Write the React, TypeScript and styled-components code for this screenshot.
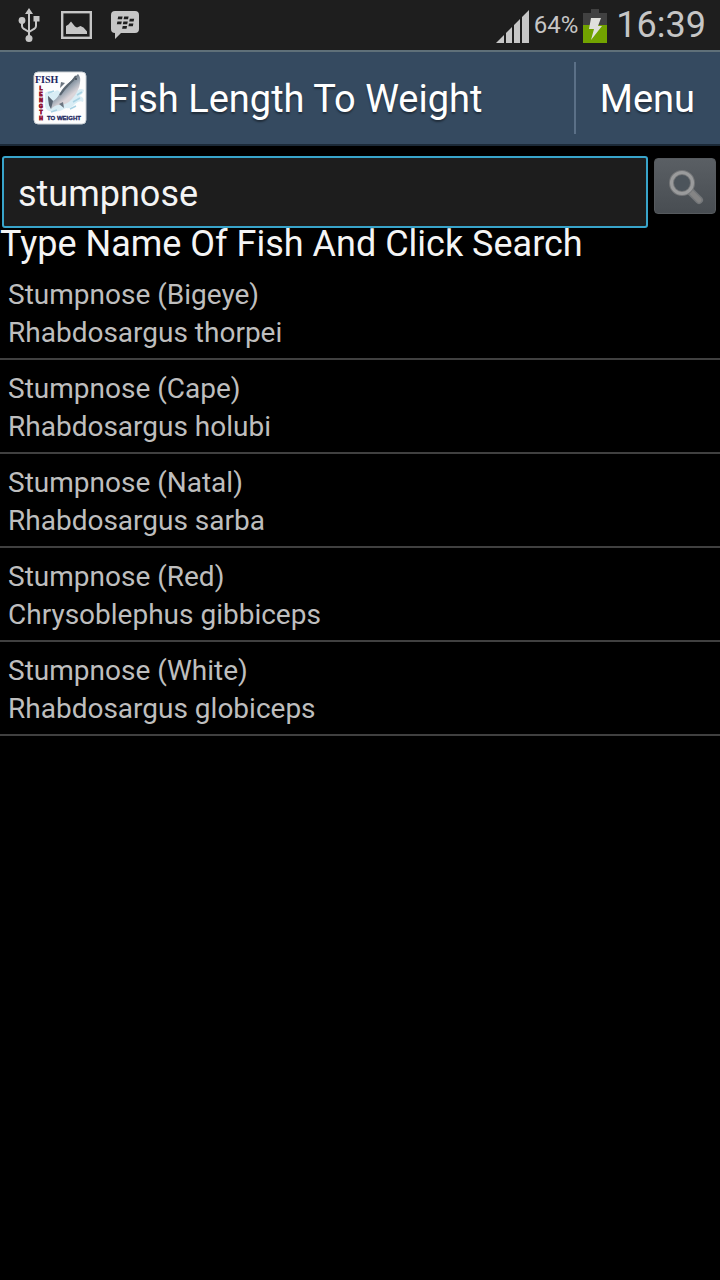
import React, { useState } from 'react';
import styled, { createGlobalStyle } from 'styled-components';

const GlobalStyle = createGlobalStyle`
  * { box-sizing: border-box; }
  body {
    margin: 0;
    background: #000;
    font-family: Roboto, "Liberation Sans", sans-serif;
  }
`;

const Screen = styled.div`
  min-height: 100vh;
  background: #000;
`;

const StatusBar = styled.div`
  display: flex;
  align-items: center;
  justify-content: space-between;
  height: 50px;
  padding: 0 14px 0 16px;
  background: #1e1e1e;
  color: #c6c6c6;
`;

const StatusGroup = styled.div<{ $gap: number }>`
  display: flex;
  align-items: center;
  gap: ${(p) => p.$gap}px;
`;

const StatusText = styled.span<{ $size: number }>`
  font-size: ${(p) => p.$size}px;
  line-height: 50px;
`;

const Clock = styled(StatusText)`
  padding-left: 4px;
`;

const AppBar = styled.header`
  display: flex;
  align-items: center;
  height: 96px;
  padding: 0 0 0 32px;
  background: #354a60;
  border-top: 2px solid #5f7079;
  border-bottom: 2px solid #1b2937;
`;

const Title = styled.h1`
  flex: 1;
  margin: 0 0 0 20px;
  padding-top: 2px;
  font-size: 38px;
  font-weight: 400;
  line-height: 48px;
  color: #fff;
  text-shadow: 0 2px 2px rgba(0, 0, 0, 0.4);
`;

const MenuButton = styled.button`
  height: 72px;
  padding: 2px 25px 0 24px;
  border: 0;
  border-left: 2px solid #5b7087;
  background: transparent;
  color: #fff;
  font: 400 38px/48px Roboto, "Liberation Sans", sans-serif;
  text-shadow: 0 2px 2px rgba(0, 0, 0, 0.4);
`;

const SearchRow = styled.form`
  display: flex;
  align-items: flex-start;
  gap: 6px;
  padding: 10px 4px 0 2px;
`;

const SearchInput = styled.input`
  flex: 1;
  min-width: 0;
  height: 72px;
  padding: 4px 14px 0;
  border: 2px solid #38a4ca;
  border-radius: 3px;
  outline: 0;
  background: #1d1d1d;
  color: #f4f4f4;
  font: 400 36px/48px Roboto, "Liberation Sans", sans-serif;
`;

const SearchButton = styled.button`
  display: grid;
  place-items: center;
  width: 62px;
  height: 56px;
  margin-top: 2px;
  padding: 2px 0 0 2px;
  border: 1px solid #565a5e;
  border-radius: 4px;
  background: linear-gradient(#5a5f64, #484d52);
`;

const Hint = styled.label`
  display: block;
  padding-bottom: 6px;
  font-size: 36px;
  line-height: 32px;
  color: #f4f4f4;
`;

const FishList = styled.ul`
  margin: 0;
  padding: 0;
  list-style: none;
`;

const FishItem = styled.li`
  padding: 10px 8px 6px;
  border-bottom: 2px solid #404040;
  color: #bebebe;
  font-size: 28px;
  line-height: 38px;
`;

const FishLine = styled.div``;

const UsbIcon = () => (
  <svg width="26" height="36" viewBox="0 0 26 36" fill="#c6c6c6" aria-hidden="true">
    <path d="M13 1l4 6H9z" />
    <path d="M13 6v25M6 14v5q0 2 2 3l5 3M20 13v6q0 2-2 3l-5 3" fill="none" stroke="#c6c6c6" strokeWidth="2" />
    <circle cx="6" cy="13.500" r="3.400" />
    <rect x="17.500" y="9" width="6" height="5.500" />
    <circle cx="13" cy="31.500" r="3.500" />
  </svg>
);

const GalleryIcon = () => (
  <svg width="32" height="28" viewBox="0 0 32 28" aria-hidden="true">
    <rect x="2.200" y="1.200" width="28.600" height="25.600" fill="none" stroke="#c6c6c6" strokeWidth="2.400" />
    <path d="M6 23v-8l2.500-1.500L11 10.500l4 5 2 1 3.500-1.500 3 1.500 3.500 4V23z" fill="#c6c6c6" />
  </svg>
);

const MessengerIcon = () => (
  <svg width="30" height="30" viewBox="0 0 30 30" aria-hidden="true">
    <path d="M5 1h20q4 0 4 4v14q0 4-4 4H11l-6 6v-6q-4 0-4-4V5q0-4 4-4z" fill="#c6c6c6" />
    <g fill="#1e1e1e">
      <path d="M8.200 6.500h4.400l-.6 2.700H7.600zM14.200 6.500h4.400l-.6 2.700h-4.400z" />
      <path d="M7.400 11.500h4.400l-.6 2.700H6.800zM13.400 11.500h4.400l-.6 2.700h-4.400z" />
      <path d="M19.800 8.800h4.400l-.6 2.700h-4.400zM19 13.500h4.400l-.6 2.700h-4.400zM12.700 16h4.400l-.6 2.700h-4.400z" />
    </g>
  </svg>
);

const SignalIcon = () => (
  <svg width="34" height="36" viewBox="0 0 34 36" fill="#c6c6c6" aria-hidden="true">
    <path d="M1 36l8-8v8zM11 36V26l6-6v16zM19 36V18l6-6v24zM27 36V10l7-7v33z" />
  </svg>
);

const BatteryIcon = () => (
  <svg width="24" height="38" viewBox="0 0 24 38" aria-hidden="true">
    <path d="M8 3h8v4h8v12H0V7h8z" fill="#414141" />
    <path d="M0 19h24v18H0z" fill="#72a300" />
    <path d="M8 12h10l-3 8h4L8 34l3-11H6z" fill="#e0e0dc" />
  </svg>
);

const SearchIcon = () => (
  <svg width="36" height="36" viewBox="0 0 36 36" aria-hidden="true">
    <path d="M23 23l8 8" stroke="#74777a" strokeWidth="8" strokeLinecap="round" />
    <path d="M22 22l9 9" stroke="#858585" strokeWidth="5" strokeLinecap="round" />
    <circle cx="14" cy="14" r="10.500" fill="#4c545b" stroke="#747678" strokeWidth="5" />
    <circle cx="14" cy="14" r="10.500" fill="none" stroke="#9a9b9c" strokeWidth="3" />
  </svg>
);

const AppLogo = () => (
  <svg width="56" height="56" viewBox="0 0 56 56" role="img" aria-label="Fish Length To Weight">
    <defs>
      <linearGradient id="fishBody" gradientUnits="userSpaceOnUse" x1="27" y1="17" x2="36" y2="28">
        <stop offset="0" stopColor="#5c6874" />
        <stop offset="0.500" stopColor="#9aa5b1" />
        <stop offset="1" stopColor="#dcd6da" />
      </linearGradient>
    </defs>
    <rect x="2" y="2" width="52" height="52" rx="4" fill="#fdfdfd" stroke="#c9ced3" />
    <path d="M13 23q5-4 8 0 4-5 7-1l3 5 10-3q7-7 11-4-1 4-5 6 6 1 4 6-4-2-8 2-4 5-9 4-8 5-14 3-6 1-7-5z" fill="#d9edf5" />
    <path d="M16 23l6-2M19 42l6-2M41 32l7-4M38 39l6-3M45 25l5-3" stroke="#a9d3e4" strokeWidth="1.500" fill="none" />
    <path d="M46 4q3 3 2 9-1 8-8 16-5 6-13 6-4 0-8 4l-2-4-1-9 5 5q4-2 7-8 4-7 10-11 4-4 8-8z" fill="url(#fishBody)" />
    <path d="M33 13l-4-1-1 6zM31 32l1 6-5-4z" fill="#6b7580" />
    <path d="M16 26l5 5-2 8-2-4z" fill="#586472" />
    <path d="M44 6q-3 5-8 9-4 4-8 10" fill="none" stroke="#596570" strokeWidth="2" />
    <circle cx="44" cy="9" r="1" fill="#3f4954" />
    <text x="3" y="13" fill="#20265e" fontFamily="Liberation Serif, serif" fontWeight="700" fontSize="10">FISH</text>
    <g fill="#8f1430" fontFamily="Liberation Sans, sans-serif" fontWeight="700" fontSize="5" textAnchor="middle" stroke="#8f1430" strokeWidth="0.800">
      <text x="9" y="20">L</text>
      <text x="9" y="26">E</text>
      <text x="9" y="32">N</text>
      <text x="9" y="38">G</text>
      <text x="9" y="44">T</text>
      <text x="9" y="50">H</text>
    </g>
    <text x="15" y="50" fill="#20265e" stroke="#20265e" strokeWidth="0.300" fontFamily="Liberation Sans, sans-serif" fontWeight="700" fontSize="6">TO WEIGHT</text>
  </svg>
);

const fishes = [
  { name: 'Stumpnose (Bigeye)', species: 'Rhabdosargus thorpei' },
  { name: 'Stumpnose (Cape)', species: 'Rhabdosargus holubi' },
  { name: 'Stumpnose (Natal)', species: 'Rhabdosargus sarba' },
  { name: 'Stumpnose (Red)', species: 'Chrysoblephus gibbiceps' },
  { name: 'Stumpnose (White)', species: 'Rhabdosargus globiceps' },
];

export default function App() {
  const [query, setQuery] = useState('stumpnose');
  return (
    <Screen>
      <GlobalStyle />
      <StatusBar>
        <StatusGroup $gap={18}>
          <UsbIcon />
          <GalleryIcon />
          <MessengerIcon />
        </StatusGroup>
        <StatusGroup $gap={5}>
          <SignalIcon />
          <StatusText $size={24}>64%</StatusText>
          <BatteryIcon />
          <Clock $size={36}>16:39</Clock>
        </StatusGroup>
      </StatusBar>
      <AppBar>
        <AppLogo />
        <Title>Fish Length To Weight</Title>
        <MenuButton type="button">Menu</MenuButton>
      </AppBar>
      <main>
        <SearchRow onSubmit={(e: React.FormEvent) => e.preventDefault()}>
          <SearchInput
            id="fish-name"
            type="text"
            value={query}
            onChange={(e: React.ChangeEvent<HTMLInputElement>) => setQuery(e.target.value)}
          />
          <SearchButton type="submit" aria-label="Search">
            <SearchIcon />
          </SearchButton>
        </SearchRow>
        <Hint htmlFor="fish-name">Type Name Of Fish And Click Search</Hint>
        <FishList>
          {fishes.map((fish) => (
            <FishItem key={fish.name}>
              <FishLine>{fish.name}</FishLine>
              <FishLine>{fish.species}</FishLine>
            </FishItem>
          ))}
        </FishList>
      </main>
    </Screen>
  );
}
